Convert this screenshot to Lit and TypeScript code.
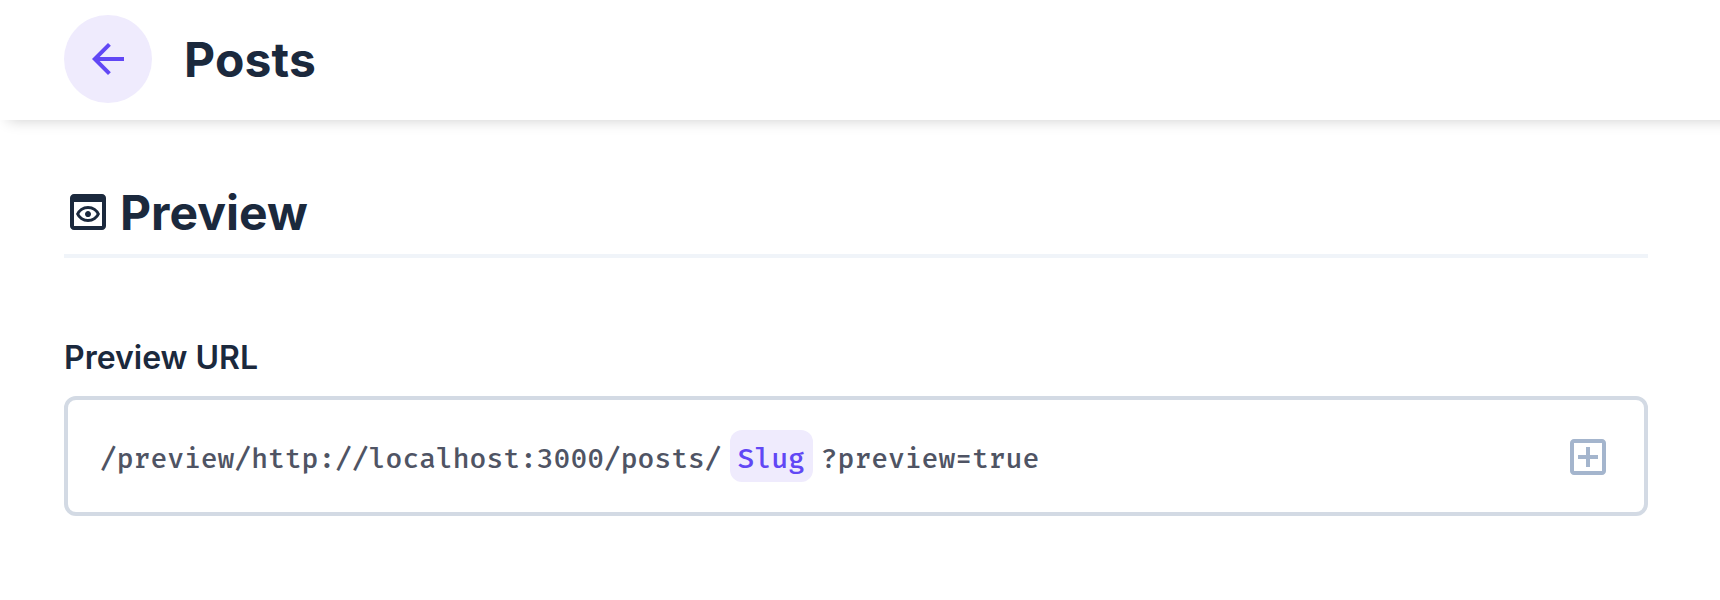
import { LitElement, html, css, svg } from "lit";
import { customElement, property } from "lit/decorators.js";

const ICONS: Record<string, string> = {
  arrow_back: "m313-440 224 224-57 56-320-320 320-320 57 56-224 224h487v80H313Z",
  preview:
    "M200-120q-33 0-56.5-23.5T120-200v-560q0-33 23.5-56.5T200-840h560q33 0 56.5 23.5T840-760v560q0 33-23.5 56.5T760-120H200Zm0-80h560v-480H200v480Zm280-80q-82 0-146.5-44.5T240-440q29-71 93.5-115.5T480-600q82 0 146.5 44.5T720-440q-29 71-93.5 115.5T480-280Zm0-60q56 0 102-26.5t72-73.5q-26-47-72-73.5T480-540q-56 0-102 26.5T306-440q26 47 72 73.5T480-340Zm0-40q-25 0-42.5-17.5T420-440q0-25 17.5-42.5T480-500q25 0 42.5 17.5T540-440q0 25-17.5 42.5T480-380Z",
  add_box:
    "M440-280h80v-160h160v-80H520v-160h-80v160H280v80h160v160ZM200-120q-33 0-56.5-23.5T120-200v-560q0-33 23.5-56.5T200-840h560q33 0 56.5 23.5T840-760v560q0 33-23.5 56.5T760-120H200Zm0-80h560v-560H200v560Z",
};

@customElement("v-icon")
class VIcon extends LitElement {
  @property() name = "";

  static styles = css`
    :host { display: block; flex: none; width: 48px; height: 48px; }
    svg { display: block; width: 100%; height: 100%; fill: currentColor; }
  `;

  render() {
    return html`<svg viewBox="0 -960 960 960" aria-hidden="true">${svg`<path d=${ICONS[this.name]}></path>`}</svg>`;
  }
}

@customElement("app-root")
class AppRoot extends LitElement {
  static styles = css`
    :host {
      display: block;
      height: 600px;
      overflow: hidden;
      background: #fff;
      color: #1b293d;
      font-family: Inter, "Liberation Sans", sans-serif;
    }
    * { box-sizing: border-box; }
    h1, h2 { margin: 0; font-size: 48px; line-height: 56px; font-weight: 700; }
    .header {
      display: flex;
      align-items: center;
      gap: 32px;
      height: 120px;
      margin-right: -40px;
      padding: 0 64px 2px;
      background: #fff;
      box-shadow: 0 8px 14px -8px rgba(0, 0, 0, 0.2);
    }
    .back {
      display: grid;
      place-items: center;
      width: 88px;
      height: 88px;
      padding: 0;
      border: 0;
      border-radius: 50%;
      background: #efebfd;
      color: #6147f5;
    }
    .header h1 { padding-top: 2px; letter-spacing: 0.2px; }
    .content { padding: 64px 72px 0 64px; }
    .divider {
      display: flex;
      align-items: center;
      gap: 8px;
      height: 74px;
      padding-bottom: 14px;
      border-bottom: 4px solid #f0f4f9;
    }
    .divider h2 { padding-top: 2px; }
    .label {
      display: block;
      margin-top: 80px;
      font-size: 32px;
      line-height: 40px;
      font-weight: 600;
    }
    .field {
      display: flex;
      align-items: center;
      justify-content: space-between;
      height: 120px;
      margin-top: 18px;
      padding: 2px 32px 0;
      border: 4px solid #d3dae4;
      border-radius: 12px;
    }
    .template {
      display: flex;
      align-items: center;
      gap: 8px;
      margin-top: -2px;
      font-family: "Fira Mono", "DejaVu Sans Mono", monospace;
      font-size: 28px;
      line-height: 46px;
      font-weight: 500;
      color: #4f5464;
      white-space: pre;
    }
    .template span { padding-top: 6px; }
    .template .chip {
      padding: 6px 8px 0;
      border-radius: 12px;
      background: #efebfd;
      color: #6147f5;
    }
    .add { color: #a4b5cd; }
  `;

  render() {
    return html`
      <header class="header">
        <button class="back" aria-label="Back"><v-icon name="arrow_back"></v-icon></button>
        <h1>Posts</h1>
      </header>
      <main class="content">
        <div class="divider">
          <v-icon name="preview"></v-icon>
          <h2>Preview</h2>
        </div>
        <span class="label">Preview URL</span>
        <div class="field">
          <div class="template"><span>/preview/http://localhost:3000/posts/</span><span class="chip">Slug</span><span>?preview=true</span></div>
          <v-icon class="add" name="add_box"></v-icon>
        </div>
      </main>
    `;
  }
}
